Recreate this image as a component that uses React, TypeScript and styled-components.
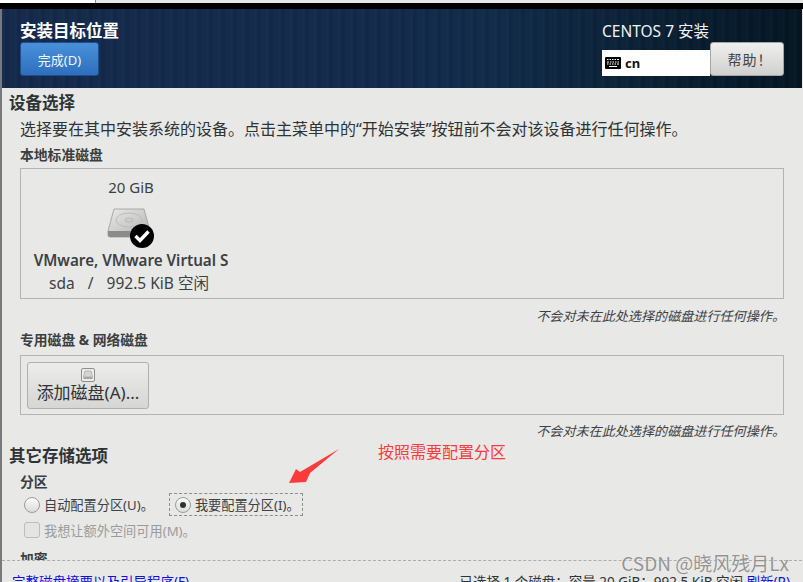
import styled, { createGlobalStyle } from "styled-components";

const UI_FONT = `"Noto Sans", "Noto Sans CJK SC", sans-serif`;

const GlobalStyle = createGlobalStyle`
  html, body {
    margin: 0;
    padding: 0;
    background: #e8e8e7;
  }
  body {
    font-family: ${UI_FONT};
    overflow: hidden;
  }
`;

const Screen = styled.div`
  position: relative;
  width: 803px;
  height: 582px;
  overflow: hidden;
  background: #e8e8e7;
  color: #2e3436;
`;

const TopStrip = styled.div`
  height: 3px;
  background: #e8e8e7;
  display: flex;
`;

const StripTab = styled.div`
  width: 95px;
  background: #fff;
  border-right: 1px solid #8a8a8a;
`;

const BlackBar = styled.div`
  height: 6px;
  background: #000;
`;

const Window = styled.div`
  border-left: 2px solid #77797a;
  margin-right: 1px;
`;

const Header = styled.header`
  height: 79px;
  box-sizing: border-box;
  padding: 13px 0 0 18px;
  display: flex;
  justify-content: space-between;
  background:
    repeating-linear-gradient(90deg, rgba(255, 255, 255, 0.018) 0 3px, rgba(0, 0, 0, 0.03) 3px 7px, rgba(255, 255, 255, 0.012) 7px 12px),
    linear-gradient(90deg, #14294a 0%, #13294b 45%, #0f2a48 62%, #0a2035 80%, #041522 100%);
`;

const HeaderLeft = styled.div`
  display: flex;
  flex-direction: column;
`;

const Title = styled.h1`
  margin: 0 0 2px;
  font-size: 16.5px;
  line-height: 18px;
  font-weight: 700;
  color: #fff;
`;

const DoneButton = styled.button`
  width: 79px;
  height: 34px;
  padding: 0;
  border: 1px solid #1c4f8c;
  border-radius: 3px;
  background: linear-gradient(180deg, #4a90d9 0%, #2d6fbd 100%);
  color: #f2f6fb;
  font-family: ${UI_FONT};
  font-size: 13px;
`;

const HeaderRight = styled.div`
  width: 200px;
  display: flex;
  flex-direction: column;
`;

const Product = styled.div`
  font-size: 15.5px;
  line-height: 18px;
  color: #f0f2f4;
  margin-bottom: 10px;
`;

const KeyRow = styled.div`
  display: flex;
  align-items: flex-start;
`;

const KeyField = styled.div`
  width: 108px;
  height: 26px;
  background: #fff;
  display: flex;
  align-items: center;
  gap: 4px;
  padding-left: 3px;
  box-sizing: border-box;
  font-size: 13px;
  font-weight: 700;
  color: #111;
`;

const HelpButton = styled.button`
  width: 74px;
  height: 34px;
  margin-top: -8px;
  padding: 0 0 0 6px;
  border: 1px solid #a5a5a3;
  border-radius: 3px;
  background: linear-gradient(180deg, #efefee 0%, #d0d0ce 100%);
  color: #444;
  font-family: ${UI_FONT};
  font-size: 14px;
  letter-spacing: 1px;
`;

const Content = styled.main`
  padding: 5px 0 0 7px;
`;

const SectionTitle = styled.h2`
  margin: 0;
  font-size: 16.5px;
  line-height: 20px;
  font-weight: 700;
  color: #2e3436;
`;

const Description = styled.p`
  margin: 6px 0 0 11px;
  font-size: 16px;
  line-height: 20px;
  white-space: nowrap;
  color: #2e3436;
`;

const Label = styled.h3<{ $top: number }>`
  margin: ${(p) => p.$top}px 0 0 11px;
  font-size: 13.8px;
  line-height: 16px;
  font-weight: 700;
  color: #3a3f41;
`;

const DiskPanel = styled.div<{ $height: number; $top: number }>`
  margin: ${(p) => p.$top}px 18px 0 11px;
  height: ${(p) => p.$height}px;
  border: 1px solid #b4b4b2;
  box-sizing: border-box;
`;

const DiskCard = styled.div`
  width: 220px;
  display: flex;
  flex-direction: column;
  align-items: center;
  padding-top: 9px;
  font-size: 15px;
  color: #3c4143;
`;

const DiskSize = styled.div`
  line-height: 18px;
`;

const DiskIconWrap = styled.div`
  margin: 11px 0 0 2px;
  height: 39px;
`;

const DiskName = styled.div`
  margin-top: 5px;
  font-size: 15.2px;
  font-weight: 600;
  line-height: 18px;
  white-space: nowrap;
`;

const DiskMeta = styled.div`
  margin: 5px 0 0 -4px;
  font-size: 15.5px;
  line-height: 18px;
  display: flex;
  gap: 13px;
  white-space: pre;
`;

const Note = styled.div<{ $top: number }>`
  margin: ${(p) => p.$top}px 17px 0 0;
  text-align: right;
  font-size: 13.1px;
  line-height: 16px;
  font-style: italic;
  color: #3c4143;
`;

const AddButton = styled.button`
  margin: 6px 0 0 6px;
  width: 122px;
  height: 47px;
  padding: 5px 0 0;
  border: 1px solid #b0b0ae;
  border-radius: 3px;
  background: linear-gradient(180deg, #ececeb 0%, #d6d6d4 100%);
  color: #2e3436;
  font-family: ${UI_FONT};
  font-size: 17px;
  line-height: 18px;
  display: flex;
  flex-direction: column;
  align-items: center;
  gap: 2px;
`;

const OptionsTitle = styled(SectionTitle)`
  margin-top: 7px;
`;

const RadioRow = styled.div`
  margin: 3px 0 0 15px;
  display: flex;
  align-items: center;
  gap: 15px;
  font-size: 13.2px;
  color: #3c4143;
`;

const RadioItem = styled.label<{ $focused?: boolean }>`
  display: flex;
  align-items: center;
  gap: 4px;
  height: 23px;
  box-sizing: border-box;
  padding: ${(p) => (p.$focused ? "0 2px 0 5px" : "0")};
  border: ${(p) => (p.$focused ? "1px dashed #8d8d8b" : "none")};
`;

const RadioDot = styled.span<{ $on?: boolean }>`
  width: 16px;
  height: 16px;
  box-sizing: border-box;
  border-radius: 50%;
  border: 1px solid #9c9c9a;
  background: linear-gradient(180deg, #fafafa, #dcdcda);
  display: flex;
  align-items: center;
  justify-content: center;
  &::after {
    content: "";
    width: 6px;
    height: 6px;
    border-radius: 50%;
    background: ${(p) => (p.$on ? "#2e3436" : "transparent")};
  }
`;

const CheckRow = styled.label`
  margin: 3px 0 0 15px;
  height: 22px;
  display: flex;
  align-items: center;
  gap: 4px;
  font-size: 13.2px;
  color: #9a9c9c;
`;

const CheckBox = styled.span`
  width: 16px;
  height: 16px;
  box-sizing: border-box;
  border: 1px solid #bdbdbb;
  border-radius: 3px;
  background: #e4e4e3;
`;

const CryptLabel = styled(Label)`
  height: 9px;
  overflow: hidden;
`;

const Footer = styled.div`
  margin: 0 0 0 -7px;
  border-top: 1px dashed #adadab;
  height: 30px;
  padding: 13px 12px 0 10px;
  display: flex;
  justify-content: space-between;
  font-size: 13.5px;
  line-height: 16px;
  white-space: nowrap;
  color: #2e3436;
`;

const FooterLink = styled.span`
  color: #1010d8;
`;

const Annotation = styled.div`
  position: absolute;
  left: 378px;
  top: 442px;
  font-family: "Noto Sans CJK SC", sans-serif;
  font-size: 16px;
  line-height: 18px;
  color: #fb3a3a;
`;

const ArrowMark = styled.svg`
  position: absolute;
  left: 286px;
  top: 448px;
`;

const Watermark = styled.div`
  position: absolute;
  right: 14px;
  top: 551px;
  font-family: "Noto Sans CJK SC", sans-serif;
  font-size: 19px;
  line-height: 24px;
  color: rgba(120, 120, 120, 0.8);
  text-shadow: 0 0 1px rgba(255, 255, 255, 0.9);
`;

const KeyboardIcon = () => (
  <svg width="16" height="12" viewBox="0 0 16 12">
    <rect x="0" y="0" width="16" height="12" rx="1" fill="#000" />
    <path
      d="M2 2.5h1.5M4.5 2.5H6M7 2.5h1.5M9.5 2.5H11M12 2.5h2M2 5h2M5 5h1.5M7.5 5H9M10 5h1.5M12.5 5H14M2 7h1.5M4.5 7H6M7 7h1.5M9.5 7H11M12 7h2M4 9.5h8"
      stroke="#fff"
      strokeWidth="1"
    />
  </svg>
);

const DiskIcon = () => (
  <svg width="50" height="44" viewBox="0 0 50 44">
    <defs>
      <linearGradient id="diskTop" x1="0" y1="0" x2="1" y2="1">
        <stop offset="0" stopColor="#e9e9e7" />
        <stop offset="1" stopColor="#b2b2b0" />
      </linearGradient>
    </defs>
    <path d="M7 2h30l6 22v4a2 2 0 0 1-2 2H3a2 2 0 0 1-2-2v-4z" fill="url(#diskTop)" stroke="#9a9a98" strokeWidth="0.8" />
    <path d="M1 24h42v4a2 2 0 0 1-2 2H3a2 2 0 0 1-2-2z" fill="#8b8b89" />
    <ellipse cx="22" cy="13" rx="13" ry="7" fill="none" stroke="#bdbdbb" />
    <ellipse cx="22" cy="13" rx="4" ry="2" fill="#cfcfcd" stroke="#a9a9a7" strokeWidth="0.6" />
    <circle cx="35" cy="29" r="12" fill="#000" />
    <path d="M28.5 29l4.5 4.5 8.5-9" fill="none" stroke="#fff" strokeWidth="3.4" />
  </svg>
);

const SmallDiskIcon = () => (
  <svg width="14" height="14" viewBox="0 0 14 14">
    <rect x="0.5" y="0.5" width="13" height="13" rx="1.5" fill="#ececea" stroke="#8f8f8d" />
    <path d="M4 3h6l1.5 6h-9z" fill="#d4d4d2" stroke="#9a9a98" strokeWidth="0.6" />
    <rect x="2.5" y="9" width="9" height="2" fill="#a5a5a3" />
  </svg>
);

const Arrow = () => (
  <ArrowMark width="56" height="46" viewBox="0 0 56 46">
    <path d="M53 1 L24 25 L20 34 L3 35 L10 21 L14 24 Z" fill="#fb3a3a" />
  </ArrowMark>
);

const App = () => {
  return (
    <Screen>
      <GlobalStyle />
      <TopStrip>
        <StripTab />
      </TopStrip>
      <BlackBar />
      <Window>
        <Header>
          <HeaderLeft>
            <Title>安装目标位置</Title>
            <DoneButton>完成(D)</DoneButton>
          </HeaderLeft>
          <HeaderRight>
            <Product>CENTOS 7 安装</Product>
            <KeyRow>
              <KeyField>
                <KeyboardIcon />
                cn
              </KeyField>
              <HelpButton>帮助！</HelpButton>
            </KeyRow>
          </HeaderRight>
        </Header>
        <Content>
          <SectionTitle>设备选择</SectionTitle>
          <Description>选择要在其中安装系统的设备。点击主菜单中的“开始安装”按钮前不会对该设备进行任何操作。</Description>
          <Label $top={8}>本地标准磁盘</Label>
          <DiskPanel $top={5} $height={131}>
            <DiskCard>
              <DiskSize>20 GiB</DiskSize>
              <DiskIconWrap>
                <DiskIcon />
              </DiskIconWrap>
              <DiskName>VMware, VMware Virtual S</DiskName>
              <DiskMeta>
                <span>sda</span>
                <span>/</span>
                <span>992.5 KiB 空闲</span>
              </DiskMeta>
            </DiskCard>
          </DiskPanel>
          <Note $top={9}>不会对未在此处选择的磁盘进行任何操作。</Note>
          <Label $top={8}>专用磁盘 &amp; 网络磁盘</Label>
          <DiskPanel $top={7} $height={60}>
            <AddButton>
              <SmallDiskIcon />
              添加磁盘(A)...
            </AddButton>
          </DiskPanel>
          <Note $top={8}>不会对未在此处选择的磁盘进行任何操作。</Note>
          <OptionsTitle>其它存储选项</OptionsTitle>
          <Label $top={8}>分区</Label>
          <RadioRow>
            <RadioItem>
              <RadioDot />
              自动配置分区(U)。
            </RadioItem>
            <RadioItem $focused>
              <RadioDot $on />
              我要配置分区(I)。
            </RadioItem>
          </RadioRow>
          <CheckRow>
            <CheckBox />
            我想让额外空间可用(M)。
          </CheckRow>
          <CryptLabel $top={10}>加密</CryptLabel>
          <Footer>
            <FooterLink>完整磁盘摘要以及引导程序(F)...</FooterLink>
            <span>
              已选择 1 个磁盘；容量 20 GiB；992.5 KiB 空闲 <FooterLink>刷新(R)</FooterLink>
            </span>
          </Footer>
        </Content>
      </Window>
      <Arrow />
      <Annotation>按照需要配置分区</Annotation>
      <Watermark>CSDN @晓风残月Lx</Watermark>
    </Screen>
  );
};

export default App;
